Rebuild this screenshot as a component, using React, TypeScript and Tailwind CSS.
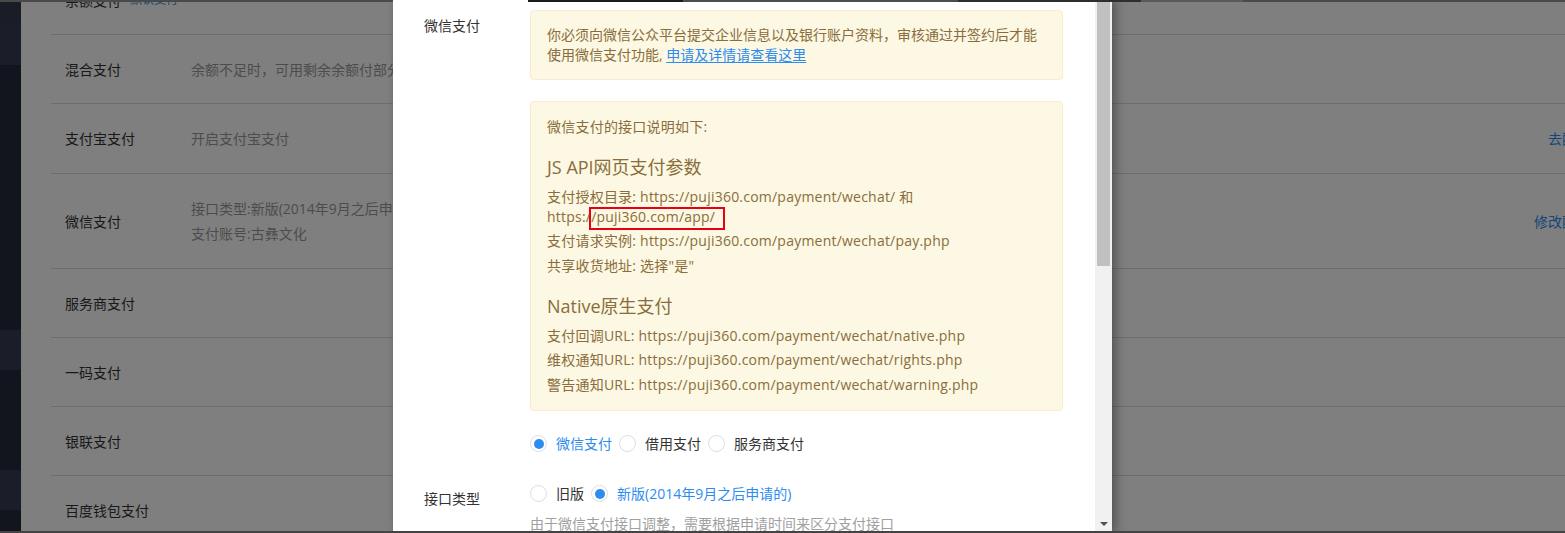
import React from "react";

const FONT = "font-['Open_Sans','Noto_Sans_CJK_SC',sans-serif]";

type Row = { label: string; tag?: string; desc?: string[]; link?: string; h: string };

const rows: Row[] = [
  { label: "余额支付", tag: "默认支付", h: "h-[69px] mt-[-34px]" },
  { label: "混合支付", desc: ["余额不足时，可用剩余余额付部分金额，剩余金额使用其他支付方式"], h: "h-[69px]" },
  { label: "支付宝支付", desc: ["开启支付宝支付"], link: "去配置", h: "h-[70px]" },
  {
    label: "微信支付",
    desc: ["接口类型:新版(2014年9月之后申请的)", "支付账号:古彝文化"],
    link: "修改配置",
    h: "h-[95px]",
  },
  { label: "服务商支付", h: "h-[69px]" },
  { label: "一码支付", h: "h-[69px]" },
  { label: "银联支付", h: "h-[69px]" },
  { label: "百度钱包支付", h: "h-[69px]" },
];

function Radio({ checked, label }: { checked?: boolean; label: string }) {
  return (
    <label className="flex items-center mr-[7px]">
      <span className="w-[17px] h-[17px] rounded-full border border-[#dcdee2] bg-white flex items-center justify-center">
        {checked && <span className="w-[10px] h-[10px] rounded-full bg-[#2d8cf0]" />}
      </span>
      <span className={"ml-[9px] text-[14px] leading-[20px] " + (checked ? "text-[#2d8cf0]" : "text-[#333]")}>
        {label}
      </span>
    </label>
  );
}

function Line({ children }: { children: React.ReactNode }) {
  return <p className="text-[14px] leading-[20px] tracking-[0.22px] mb-[4.5px] last:mb-0">{children}</p>;
}

export default function App() {
  return (
    <div className={"relative w-[1565px] h-[533px] overflow-hidden bg-white " + FONT}>
      {/* background page */}
      <div className="flex h-full">
        <div className="w-[21px] shrink-0 h-full flex flex-col bg-[#24283d]">
          <div className="h-[23px] bg-[#34384c]" />
          <div className="h-[42px] bg-[#363a52]" />
          <div className="h-[265px]" />
          <div className="h-[40px] bg-[#363a52]" />
          <div className="h-[100px]" />
          <div className="h-[40px] bg-[#363a52]" />
        </div>
        <div className="shrink-0 w-[1583px] pl-[30px]">
          {rows.map((r, i) => (
            <div key={i} className={"flex items-center px-[14px] border-b border-[#dddddd] " + r.h}>
              <div className="w-[126px] shrink-0 flex items-center text-[14px] text-[#333]">
                <span>{r.label}</span>
                {r.tag && <span className="ml-[9px] text-[12px] text-[#2d8cf0]">{r.tag}</span>}
              </div>
              <div className="flex-1 text-[14px] text-[#999] leading-[25px]">
                {r.desc?.map((d, j) => (
                  <div key={j}>{d}</div>
                ))}
              </div>
              {r.link && <div className="text-[14px] text-[#2d8cf0]">{r.link}</div>}
            </div>
          ))}
        </div>
      </div>

      {/* mask */}
      <div className="absolute inset-0 bg-black/50" />

      {/* modal */}
      <div className="absolute left-[393px] top-0 w-[719px] h-full bg-white flex shadow-[4px_0_10px_rgba(0,0,0,0.35)]">
        <div className="flex-1 overflow-hidden pl-[31px] pt-[10px]">
          <div className="flex">
            <div className="w-[106px] shrink-0 pt-[6px] text-[14px] leading-[20px] text-[#333]">微信支付</div>
            <div className="w-[533px] shrink-0">
              <div className="rounded-[4px] border border-[#faebcc] bg-[#fcf8e3] px-[16px] py-[14px] text-[14px] leading-[20px] text-[#8a6d3b]">
                你必须向微信公众平台提交企业信息以及银行账户资料，审核通过并签约后才能使用微信支付功能,{" "}
                <a className="text-[#2d8cf0] underline underline-offset-2">申请及详情请查看这里</a>
              </div>
              <div className="mt-[21px] rounded-[4px] border border-[#faebcc] bg-[#fcf8e3] px-[16px] py-[15px] text-[#8a6d3b]">
                <Line>微信支付的接口说明如下:</Line>
                <h4 className="mt-[16.5px] mb-[7px] text-[18px] leading-[26px] font-normal">JS API网页支付参数</h4>
                <Line>
                  支付授权目录: https://puji360.com/payment/wechat/ 和{" "}
                  <span className="whitespace-nowrap">
                    https:/
                    <span className="relative inline-block leading-[20px]">
                      /puji360.com/app/
                      <span className="absolute -left-[2px] -right-[10px] top-0 -bottom-[3px] border-2 border-[#e60012]" />
                    </span>
                  </span>
                </Line>
                <Line>支付请求实例: https://puji360.com/payment/wechat/pay.php</Line>
                <Line>共享收货地址: 选择"是"</Line>
                <h4 className="mt-[17px] mb-[7px] text-[18px] leading-[26px] font-normal">Native原生支付</h4>
                <Line>支付回调URL: https://puji360.com/payment/wechat/native.php</Line>
                <Line>维权通知URL: https://puji360.com/payment/wechat/rights.php</Line>
                <Line>警告通知URL: https://puji360.com/payment/wechat/warning.php</Line>
              </div>
              <div className="mt-[23px] flex items-center">
                <Radio checked label="微信支付" />
                <Radio label="借用支付" />
                <Radio label="服务商支付" />
              </div>
            </div>
          </div>
          <div className="flex mt-[30px]">
            <div className="w-[106px] shrink-0 pt-[5px] text-[14px] leading-[20px] text-[#333]">接口类型</div>
            <div className="w-[533px] shrink-0">
              <div className="flex items-center">
                <Radio label="旧版" />
                <Radio checked label="新版(2014年9月之后申请的)" />
              </div>
              <div className="mt-[10px] text-[14px] leading-[20px] text-[#a0a0a0]">
                由于微信支付接口调整，需要根据申请时间来区分支付接口
              </div>
            </div>
          </div>
        </div>
        {/* scrollbar */}
        <div className="relative w-[17px] shrink-0 h-full bg-[#f1f1f1]">
          <div className="absolute left-[2px] right-[2px] top-[2px] h-[264px] bg-[#c1c1c1]" />
          <div className="absolute left-[5px] top-[522px] w-0 h-0 border-l-[4px] border-r-[4px] border-t-[4px] border-l-transparent border-r-transparent border-t-[#505050]" />
        </div>
      </div>

      {/* top & bottom edge strips */}
      <div className="absolute left-0 top-0 w-full h-[2px] flex">
        <div className="w-[393px] bg-[#4a4a4a]" />
        <div className="w-[135px]" />
        <div className="w-[155px] bg-[#1c1c1c]" />
        <div className="w-[275px] bg-[#4c4c4c]" />
        <div className="w-[183px] bg-[#2e2e2e]" />
        <div className="w-[102px] bg-[#5a5a5a]" />
        <div className="flex-1 bg-[#4a4a4a]" />
      </div>
      <div className="absolute left-0 bottom-0 w-full h-[2px] bg-[#444]" />
    </div>
  );
}
